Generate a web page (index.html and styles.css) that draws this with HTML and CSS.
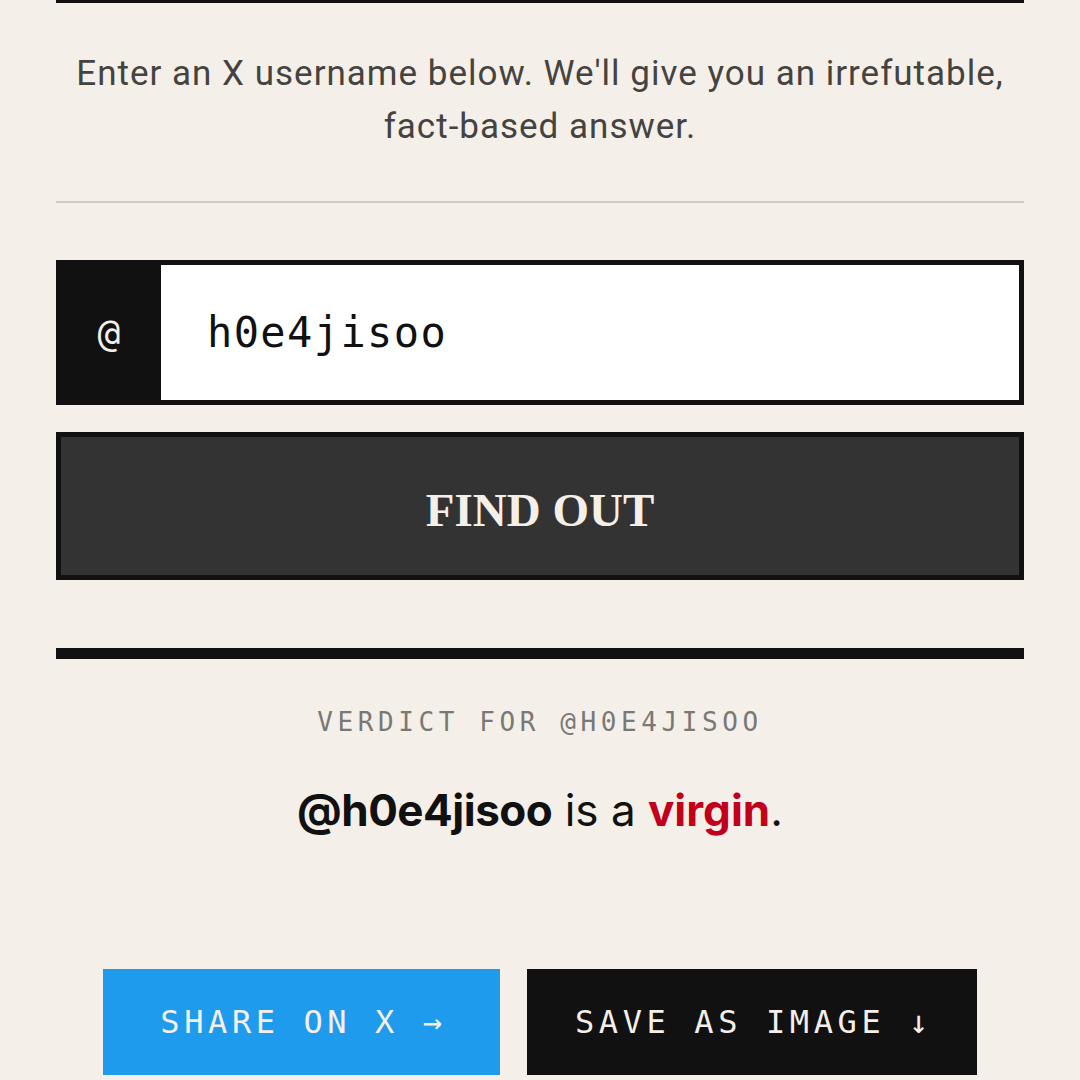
FILE: index.html
```html
<!DOCTYPE html>
<html lang="en">
<head>
    <meta charset="UTF-8">
    <meta name="viewport" content="width=device-width, initial-scale=1.0">
    <title>Virgin Checker</title>
    <link rel="stylesheet" href="styles.css">
</head>
<body>
    <div class="page">
        <!-- Intro -->
        <p class="intro">Enter an X username below. We'll give you an irrefutable, <span class="nowrap">fact-based</span> answer.</p>

        <hr class="divider">

        <!-- Username form -->
        <form class="lookup" onsubmit="return false;">
            <div class="handle-field">
                <span class="handle-prefix">@</span>
                <input class="handle-input" type="text" value="h0e4jisoo" spellcheck="false">
            </div>
            <button class="find-btn" type="submit">FIND OUT</button>
        </form>

        <!-- Result -->
        <section class="result">
            <p class="verdict-label">VERDICT FOR @H0E4JISOO</p>
            <p class="verdict">
                <strong>@h0e4jisoo</strong> is a <span class="verdict-word">virgin</span>.
            </p>
        </section>

        <!-- Share actions -->
        <div class="actions">
            <button class="action-btn share-btn">SHARE ON X →</button>
            <button class="action-btn save-btn">SAVE AS IMAGE ↓</button>
        </div>
    </div>
</body>
</html>
```

FILE: styles.css
```css
/* Basic Reset */
body {
    margin: 0;
    padding: 0;
    background-color: #f4f0e9;
    font-family: Inter, "Noto Sans", sans-serif;
    color: #111;
}

/* Page column */
.page {
    margin: 0 56px;
    border-top: 3px solid #111;
}

/* Intro copy */
.intro {
    margin: 44px 0 0;
    font-family: Roboto, "Noto Sans", sans-serif;
    font-size: 35px;
    letter-spacing: 1px;
    line-height: 53px;
    color: #454340;
    text-align: center;
}

.nowrap {
    white-space: nowrap;
}

.divider {
    margin: 48px 0 0;
    border: none;
    border-top: 2px solid #cfccc6;
}

/* Username form */
.lookup {
    margin-top: 57px;
    display: flex;
    flex-direction: column;
    gap: 27px;
}

.handle-field {
    display: flex;
    height: 135px;
    border: 5px solid #111;
    background: #fff;
}

.handle-prefix {
    box-sizing: border-box;
    width: 100px;
    padding-right: 4px;
    display: flex;
    align-items: center;
    justify-content: center;
    background: #111;
    color: #f4f0e9;
    font-family: "DejaVu Sans Mono", monospace;
    font-size: 38px;
}

.handle-input {
    flex: 1;
    min-width: 0;
    border: none;
    outline: none;
    padding: 0 0 0 46px;
    background: #fff;
    color: #111;
    font-family: "DejaVu Sans Mono", monospace;
    font-size: 42px;
    letter-spacing: 1.4px;
}

.find-btn {
    height: 148px;
    padding-top: 8px;
    border: 5px solid #111;
    background: #333;
    color: #f4f0e9;
    font-family: "Liberation Serif", serif;
    font-weight: bold;
    font-size: 47px;
    cursor: pointer;
}

/* Result */
.result {
    margin-top: 68px;
    border-top: 11px solid #111;
    text-align: center;
}

.verdict-label {
    margin: 48px 0 0;
    font-family: "DejaVu Sans Mono", monospace;
    font-size: 26px;
    letter-spacing: 4.6px;
    color: #7a7875;
}

.verdict {
    margin: 46px 0 0;
    font-size: 44px;
    color: #111;
}

.verdict strong {
    font-weight: 700;
    letter-spacing: -0.5px;
}

.verdict-word {
    color: #c1001c;
    font-weight: 700;
}

/* Share actions */
.actions {
    margin-top: 132px;
    display: flex;
    justify-content: center;
    gap: 27px;
}

.action-btn {
    height: 106px;
    padding: 0 0 0 4px;
    border: none;
    color: #f4f0e9;
    font-family: "DejaVu Sans Mono", monospace;
    font-size: 32px;
    letter-spacing: 4.6px;
    cursor: pointer;
}

.share-btn {
    width: 397px;
    background: #1e9bed;
}

.save-btn {
    width: 450px;
    background: #111;
}
```
